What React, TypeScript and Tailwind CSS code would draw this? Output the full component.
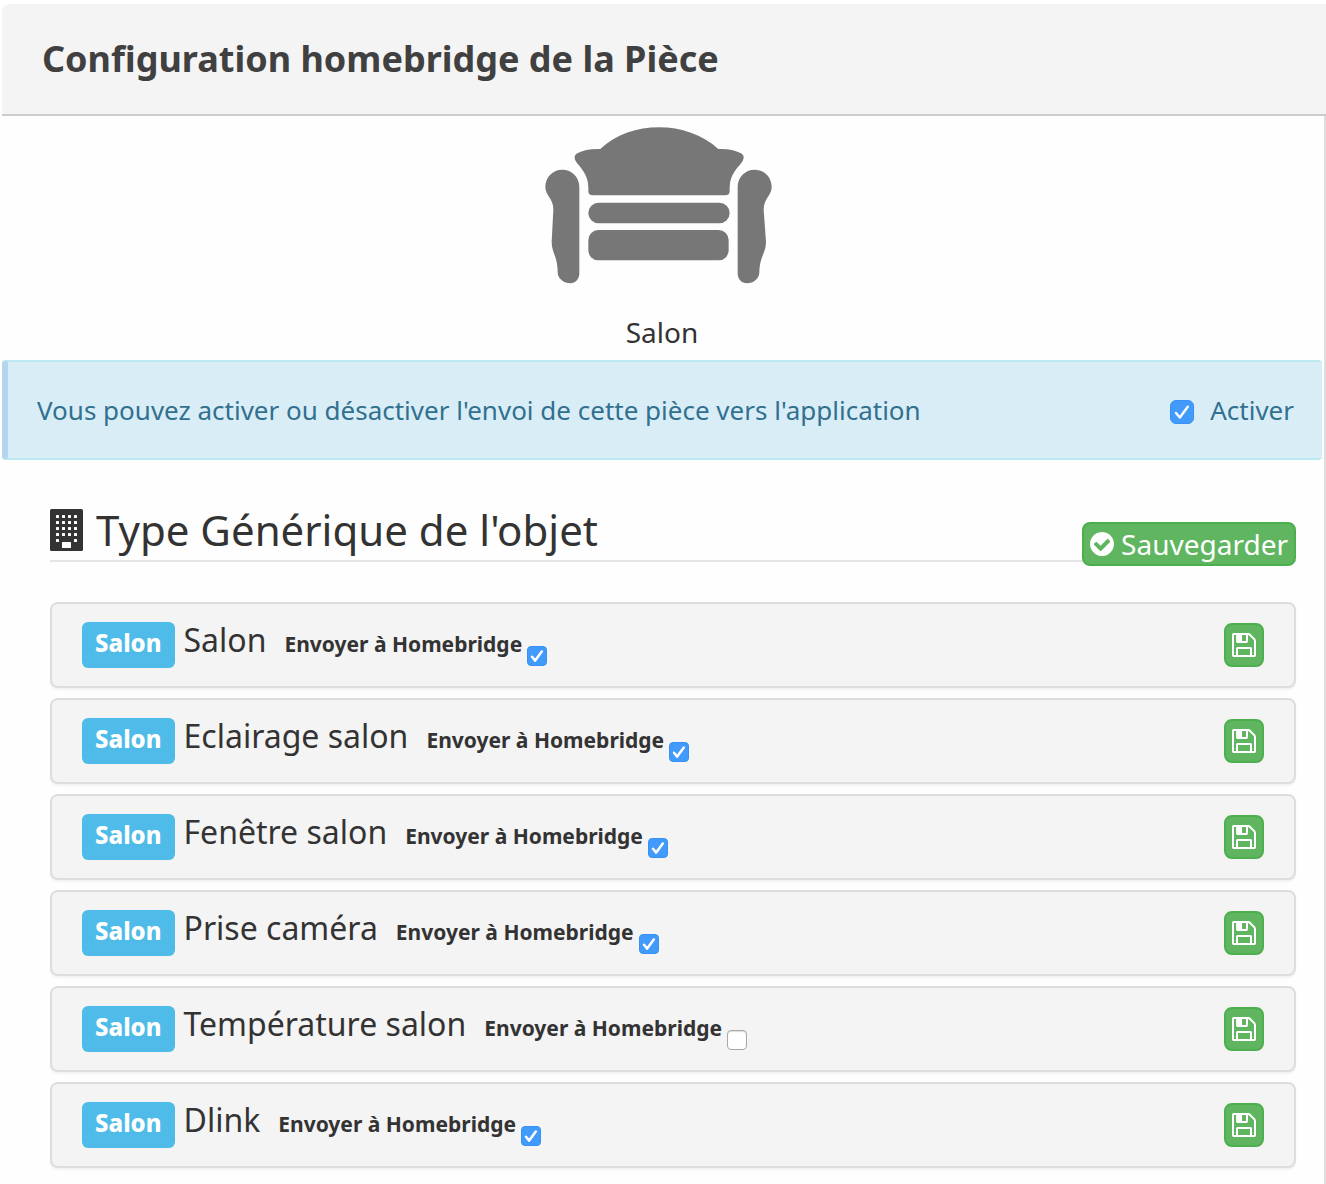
import { useId, useState } from "react";

type Equipment = { name: string; sent: boolean };

const equipments: Equipment[] = [
  { name: "Salon", sent: true },
  { name: "Eclairage salon", sent: true },
  { name: "Fenêtre salon", sent: true },
  { name: "Prise caméra", sent: true },
  { name: "Température salon", sent: false },
  { name: "Dlink", sent: true },
];

function SofaIcon() {
  return (
    <svg viewBox="46 52 681 471" className="mr-2 h-[157px] w-[227px] fill-[#777777]" aria-hidden="true">
      <path d="M212 118C260 73 322 53 388 53S518 75 566 118C592 117 617 121 634 131C643 136 644 145 639 154C628 172 600 191 600 234V245Q600 257 587 257H190Q176 257 176 245V234C176 192 150 173 138 154C133 145 134 136 143 131C160 121 184 117 212 118Z" />
      <rect x="176" y="279" width="424" height="62" rx="31" />
      <rect x="176" y="361" width="421" height="91" rx="30" />
      <path d="M98 180C127 180 149 203 149 232V491C149 509 137 521 122 521C102 521 84 507 84 488C84 440 66 430 66 396L71 300C71 266 47 258 47 232C47 203 69 180 98 180Z" />
      <path d="M675 180C646 180 624 203 624 232V491C624 509 636 521 652 521C672 521 689 507 689 488C690 440 709 430 709 396L702 300C702 266 726 258 726 232C726 203 704 180 675 180Z" />
    </svg>
  );
}

function BuildingIcon() {
  const columns = [6, 12, 18, 24];
  const rows = [6, 12, 18, 24];
  return (
    <svg viewBox="0 0 33 42" className="h-[42px] w-[33px]" aria-hidden="true">
      <rect width="33" height="42" rx="1.5" fill="#333" />
      {rows.map((y) => columns.map((x) => <rect key={`${x}-${y}`} x={x} y={y} width="3" height="3" rx="0.5" fill="#fff" />))}
      <rect x="6" y="30" width="3" height="3" rx="0.5" fill="#fff" />
      <rect x="24" y="30" width="3" height="3" rx="0.5" fill="#fff" />
      <rect x="12" y="33" width="9" height="6" rx="0.5" fill="#fff" />
    </svg>
  );
}

function CheckCircleIcon() {
  return (
    <svg viewBox="128 128 1536 1536" className="size-6 fill-current" aria-hidden="true">
      <path d="M1412 734q0-28-18-46l-91-90q-19-19-45-19t-45 19l-408 407-226-226q-19-19-45-19t-45 19l-91 90q-18 18-18 46 0 27 18 45l362 362q19 19 45 19 27 0 46-19l543-543q18-18 18-45zm252 162q0 209-103 385.5t-279.5 279.5-385.5 103-385.5-103-279.5-279.5-103-385.5 103-385.5 279.5-279.5 385.5-103 385.5 103 279.5 279.5 103 385.5z" />
    </svg>
  );
}

function FloppyIcon() {
  return (
    <svg viewBox="128 128 1536 1536" className="size-6 fill-current" aria-hidden="true">
      <path d="M512 1536h768v-384h-768v384zm896 0h128v-896q0-14-10-38.5t-20-34.5l-281-281q-10-10-34-20t-39-10v416q0 40-28 68t-68 28h-576q-40 0-68-28t-28-68v-416h-128v1280h128v-416q0-40 28-68t68-28h832q40 0 68 28t28 68v416zm-384-928v-320q0-13-9.5-22.5t-22.5-9.5h-192q-13 0-22.5 9.5t-9.5 22.5v320q0 13 9.5 22.5t22.5 9.5h192q13 0 22.5-9.5t9.5-22.5zm640 32v928q0 40-28 68t-68 28h-1344q-40 0-68-28t-28-68v-1344q0-40 28-68t68-28h928q40 0 88 20t76 48l280 280q28 28 48 76t20 88z" />
    </svg>
  );
}

function Checkbox({ id, initial, large }: { id: string; initial: boolean; large?: boolean }) {
  const [checked, setChecked] = useState(initial);
  return (
    <span className={large ? "grid size-6" : "grid size-5"}>
      <input
        id={id}
        type="checkbox"
        checked={checked}
        onChange={(e) => setChecked(e.target.checked)}
        className={`col-start-1 row-start-1 size-full appearance-none border border-[#a8a8a8] bg-white shadow-[inset_0_1px_1px_#ddd] checked:border-[#3792f4] checked:bg-[#429bfb] checked:shadow-none ${large ? "rounded-md" : "rounded"}`}
      />
      {checked && (
        <svg viewBox="0 0 20 20" className="pointer-events-none col-start-1 row-start-1 size-full" aria-hidden="true">
          <path d="M5 10.8L8.2 14.6L14.8 5.6" fill="none" stroke="#fff" strokeWidth={large ? 2 : 2.5} strokeLinecap="round" strokeLinejoin="round" />
        </svg>
      )}
    </span>
  );
}

function EquipmentRow({ name, sent }: Equipment) {
  const id = useId();
  return (
    <li className="flex h-[86px] items-center justify-between rounded-lg border-2 border-[#dddddd] bg-[#f4f4f4] px-[30px] shadow-[0_2px_2px_rgba(0,0,0,0.05)]">
      <div className="flex items-center">
        <span className="mr-[9px] flex h-[46px] items-center rounded-md bg-[#4fbbe8] px-[13px] pb-1 text-2xl font-extrabold text-white">Salon</span>
        <h3 className="mr-[18px] pb-[10px] text-[32px] leading-[44px]">{name}</h3>
        <label htmlFor={id} className="mr-[5px] pb-0.5 text-[21px] leading-[30px] font-bold">
          Envoyer à Homebridge
        </label>
        <div className="pt-[22px]">
          <Checkbox id={id} initial={sent} />
        </div>
      </div>
      <button
        type="button"
        aria-label={`Sauvegarder ${name}`}
        className="flex h-11 w-10 items-center justify-center rounded-lg border-2 border-[#4cae4c] bg-[#60b660] text-white"
      >
        <FloppyIcon />
      </button>
    </li>
  );
}

export default function App() {
  return (
    <div className="flex min-h-screen flex-col bg-white pt-1 pl-0.5 font-['Noto_Sans',sans-serif] text-[#333333]">
      <header className="rounded-tl-lg border-b-2 border-[#cccccc] bg-[#f4f4f4] px-10 py-[30px]">
        <h1 className="text-4xl leading-[50px] font-bold text-[#404040]">Configuration homebridge de la Pièce</h1>
      </header>
      <main className="grow border-r-2 border-[#dddddd] bg-[#fefefe]">
        <div className="flex flex-col items-center pt-[11px] pr-0.5">
          <SofaIcon />
          <p className="mt-7 mb-2 text-[28px] leading-10">Salon</p>
        </div>

        <section className="mr-0.5 flex h-[100px] items-center justify-between rounded border-y-2 border-l-6 border-y-[#bce8f1] border-l-[#b2d6ed] bg-[#d9edf7] pr-7 pl-[29px] text-[26px] text-[#31708f]">
          <p>Vous pouvez activer ou désactiver l'envoi de cette pièce vers l'application</p>
          <div className="flex items-center gap-4">
            <div className="pt-1">
              <Checkbox id="activer" initial large />
            </div>
            <label htmlFor="activer">Activer</label>
          </div>
        </section>

        <section className="pt-10 pr-7 pl-12">
          <div className="flex items-end justify-between border-b-2 border-[#e5e5e5]">
            <h2 className="flex items-center gap-[13px] text-[42px] leading-[60px]">
              <BuildingIcon />
              Type Générique de l'objet
            </h2>
            <button
              type="button"
              className="-mb-[6px] flex h-11 items-center gap-[7px] rounded-lg border-2 border-[#4cae4c] bg-[#60b660] px-[6px] text-[28px] leading-[38px] text-white"
            >
              <CheckCircleIcon />
              Sauvegarder
            </button>
          </div>
          <ul className="mt-10 flex flex-col gap-[10px] pb-4">
            {equipments.map((item) => (
              <EquipmentRow key={item.name} {...item} />
            ))}
          </ul>
        </section>
      </main>
    </div>
  );
}
